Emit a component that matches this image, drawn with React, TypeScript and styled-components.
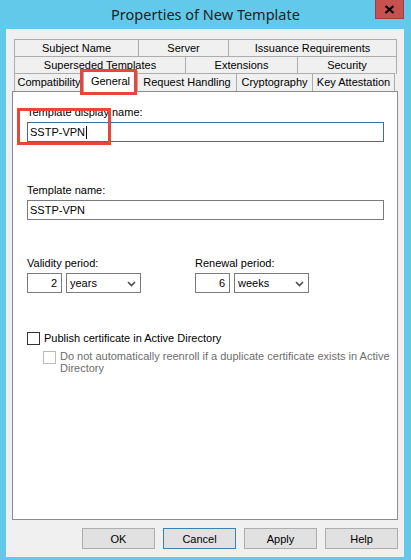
import React from "react";
import styled, { createGlobalStyle } from "styled-components";

const GlobalStyle = createGlobalStyle`
  html, body {
    margin: 0;
    padding: 0;
    background: #62c9eb;
  }
  body {
    font-family: "Liberation Sans", Arial, sans-serif;
    font-size: 11px;
    color: #000;
  }
`;

const tabRows: { label: string; width: number; selected?: boolean }[][] = [
  [
    { label: "Subject Name", width: 125 },
    { label: "Server", width: 91 },
    { label: "Issuance Requirements", width: 169 },
  ],
  [
    { label: "Superseded Templates", width: 172 },
    { label: "Extensions", width: 113 },
    { label: "Security", width: 100 },
  ],
  [
    { label: "Compatibility", width: 70 },
    { label: "General", width: 55, selected: true },
    { label: "Request Handling", width: 100 },
    { label: "Cryptography", width: 77 },
    { label: "Key Attestation", width: 83 },
  ],
];

export default function App() {
  return (
    <>
      <GlobalStyle />
      <Window>
        <TitleBar>
          <Title>Properties of New Template</Title>
          <CloseButton>
            <svg width="11" height="9" viewBox="0 0 11 9">
              <path d="M1.5 1 L9.5 8 M9.5 1 L1.5 8" stroke="#000" strokeWidth="2.2" />
            </svg>
          </CloseButton>
        </TitleBar>
        <Client>
          <TabStrip>
            {tabRows.map((row, i) => (
              <TabRow key={i} $last={i === tabRows.length - 1}>
                {row.map((t) => (
                  <Tab key={t.label} $width={t.width} $selected={!!t.selected}>
                    {t.label}
                    {t.selected && <TabHighlight />}
                  </Tab>
                ))}
              </TabRow>
            ))}
          </TabStrip>
          <Panel>
            <Field>
              <Label>Template display name:</Label>
              <TextInput $focused>
                SSTP-VPN
                <Caret />
              </TextInput>
              <FieldHighlight />
            </Field>
            <Field $gap={42}>
              <Label>Template name:</Label>
              <TextInput>SSTP-VPN</TextInput>
            </Field>
            <PeriodGrid>
              <div>
                <Label>Validity period:</Label>
                <PeriodControls>
                  <NumberBox>2</NumberBox>
                  <Combo>
                    years
                    <ComboArrow />
                  </Combo>
                </PeriodControls>
              </div>
              <div>
                <Label>Renewal period:</Label>
                <PeriodControls>
                  <NumberBox>6</NumberBox>
                  <Combo>
                    weeks
                    <ComboArrow />
                  </Combo>
                </PeriodControls>
              </div>
            </PeriodGrid>
            <CheckRow>
              <CheckBox />
              <CheckLabel>Publish certificate in Active Directory</CheckLabel>
            </CheckRow>
            <CheckRow $indent $disabled>
              <CheckBox $disabled />
              <CheckLabel $disabled>
                Do not automatically reenroll if a duplicate certificate exists in Active
                Directory
              </CheckLabel>
            </CheckRow>
          </Panel>
          <ButtonBar>
            <Button>OK</Button>
            <Button $default>Cancel</Button>
            <Button>Apply</Button>
            <Button>Help</Button>
          </ButtonBar>
        </Client>
      </Window>
    </>
  );
}

const ComboArrow = () => (
  <ArrowIcon width="9" height="6" viewBox="0 0 9 6">
    <path d="M1 1 L4.5 4.5 L8 1" fill="none" stroke="#4a4a4a" strokeWidth="1.6" />
  </ArrowIcon>
);

const Window = styled.div`
  width: 411px;
  height: 560px;
  display: flex;
  flex-direction: column;
  box-sizing: border-box;
  padding: 0 7px 3px 6px;
`;

const TitleBar = styled.div`
  height: 29px;
  position: relative;
  display: flex;
  align-items: center;
  justify-content: center;
  margin: 0 -7px 0 -6px;
`;

const Title = styled.div`
  font-family: "Noto Sans", "Open Sans", sans-serif;
  font-size: 14.5px;
  color: #222;
  margin-top: -1px;
`;

const CloseButton = styled.div`
  position: absolute;
  top: 0;
  right: 7px;
  width: 29px;
  height: 19px;
  box-sizing: border-box;
  background: #c75050;
  border: 1px solid #9e3e3e;
  border-top: none;
  display: flex;
  align-items: center;
  justify-content: center;
`;

const Client = styled.div`
  flex: 1;
  background: #f0f0f0;
  display: flex;
  flex-direction: column;
  padding: 10px 6px 0 6px;
`;

const TabStrip = styled.div`
  display: flex;
  flex-direction: column;
  padding-left: 2px;
`;

const TabRow = styled.div<{ $last: boolean }>`
  display: flex;
  align-items: flex-start;
  height: ${(p) => (p.$last ? 18 : 17)}px;
`;

const Tab = styled.div<{ $width: number; $selected: boolean }>`
  position: relative;
  z-index: ${(p) => (p.$selected ? 2 : 1)};
  box-sizing: border-box;
  width: ${(p) => p.$width}px;
  height: ${(p) => (p.$selected ? 21 : 18)}px;
  margin-top: ${(p) => (p.$selected ? -2 : 0)}px;
  margin-left: -1px;
  &:first-child {
    margin-left: 0;
  }
  border: 1px solid #acacac;
  border-bottom: none;
  background: ${(p) => (p.$selected ? "#fff" : "#f0f0f0")};
  display: flex;
  justify-content: center;
  align-items: ${(p) => (p.$selected ? "flex-start" : "center")};
  padding-top: ${(p) => (p.$selected ? 3 : 0)}px;
  white-space: nowrap;
  line-height: 13px;
`;

const TabHighlight = styled.div`
  position: absolute;
  top: -3px;
  left: -4px;
  right: 0;
  bottom: -3px;
  border: 3px solid #e8453c;
  pointer-events: none;
`;

const Panel = styled.div`
  position: relative;
  z-index: 0;
  height: 429px;
  box-sizing: border-box;
  background: #fff;
  border: 1px solid #8c8c8c;
  padding: 14px 4px 0 14px;
  display: flex;
  flex-direction: column;
`;

const Field = styled.div<{ $gap?: number }>`
  position: relative;
  margin-top: ${(p) => p.$gap ?? 0}px;
  display: flex;
  flex-direction: column;
`;

const Label = styled.div`
  line-height: 13px;
  margin-bottom: 3px;
  white-space: nowrap;
`;

const TextInput = styled.div<{ $focused?: boolean }>`
  width: 357px;
  height: 20px;
  box-sizing: border-box;
  border: 1px solid ${(p) => (p.$focused ? "#3b6fa0" : "#7a7a7a")};
  padding: 0 2px;
  display: flex;
  align-items: center;
  line-height: 13px;
`;

const Caret = styled.span`
  display: inline-block;
  width: 1px;
  height: 13px;
  background: #000;
  margin-left: 1px;
`;

const FieldHighlight = styled.div`
  position: absolute;
  top: 2px;
  left: -10px;
  width: 94px;
  height: 37px;
  box-sizing: border-box;
  border: 3px solid #e8453c;
  pointer-events: none;
`;

const PeriodGrid = styled.div`
  margin-top: 37px;
  display: grid;
  grid-template-columns: 168px auto;
`;

const PeriodControls = styled.div`
  display: flex;
  gap: 4px;
`;

const NumberBox = styled.div`
  width: 35px;
  height: 20px;
  box-sizing: border-box;
  border: 1px solid #7a7a7a;
  padding: 0 4px;
  display: flex;
  align-items: center;
  justify-content: flex-end;
`;

const Combo = styled.div`
  width: 75px;
  height: 20px;
  box-sizing: border-box;
  border: 1px solid #7a7a7a;
  padding: 0 4px 0 3px;
  display: flex;
  align-items: center;
  justify-content: space-between;
`;

const ArrowIcon = styled.svg`
  display: block;
  margin-top: 1px;
`;

const CheckRow = styled.div<{ $indent?: boolean; $disabled?: boolean }>`
  display: flex;
  align-items: flex-start;
  gap: 4px;
  margin-top: ${(p) => (p.$indent ? 6 : 39)}px;
  margin-left: ${(p) => (p.$indent ? 16 : 0)}px;
`;

const CheckBox = styled.div<{ $disabled?: boolean }>`
  flex: none;
  width: 13px;
  height: 13px;
  box-sizing: border-box;
  border: 1px solid ${(p) => (p.$disabled ? "#bcbcbc" : "#333")};
  background: #fff;
`;

const CheckLabel = styled.div<{ $disabled?: boolean }>`
  line-height: 12px;
  color: ${(p) => (p.$disabled ? "#6d6d6d" : "#000")};
  width: 334px;
  margin-top: ${(p) => (p.$disabled ? -1 : 0)}px;
`;

const ButtonBar = styled.div`
  display: flex;
  justify-content: flex-end;
  gap: 8px;
  margin-top: 8px;
`;

const Button = styled.div<{ $default?: boolean }>`
  width: 73px;
  height: 21px;
  box-sizing: border-box;
  background: #e1e1e1;
  border: 1px solid ${(p) => (p.$default ? "#3c7fb1" : "#adadad")};
  display: flex;
  align-items: center;
  justify-content: center;
`;
